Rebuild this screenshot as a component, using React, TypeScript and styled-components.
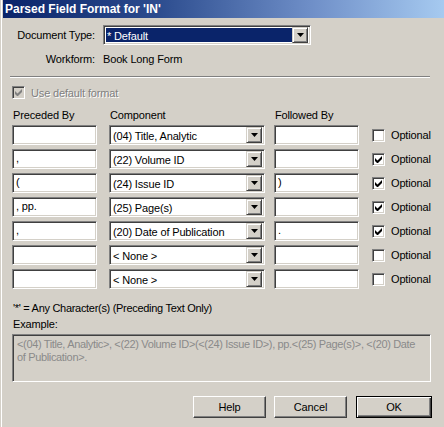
import React from "react";
import styled, { createGlobalStyle } from "styled-components";

const FACE = "#d4d0c8";
const SHADOW = "#808080";
const DARK = "#404040";

const GlobalStyle = createGlobalStyle`
  html, body { margin: 0; padding: 0; background: ${FACE}; }
  body {
    font-family: "Liberation Sans", Arial, sans-serif;
    font-size: 11px;
    letter-spacing: -0.15px;
    color: #000;
  }
  * { box-sizing: border-box; }
`;

const Window = styled.div`
  width: 444px;
  height: 427px;
  background: ${FACE};
  box-shadow: inset 1px 0 0 ${FACE}, inset 2px 0 0 #ffffff;
  padding-left: 3px;
  overflow: hidden;
`;

const TitleBar = styled.div`
  height: 18px;
  background: linear-gradient(to right, #0a246a 0%, #2c4c8e 35%, #6f8fc8 70%, #a6caf0 100%);
  color: #fff;
  font-weight: bold;
  font-size: 12px;
  letter-spacing: 0;
  line-height: 18px;
  padding-left: 2px;
  white-space: nowrap;
`;

const Body = styled.div`
  padding: 7px 12px 0 9px;
`;

const TopGrid = styled.div`
  display: grid;
  grid-template-columns: 83px 208px;
  column-gap: 8px;
  row-gap: 8px;
  align-items: center;
`;

const RightLabel = styled.div`
  text-align: right;
  white-space: nowrap;
`;

const SunkenBox = styled.div`
  border: 1px solid;
  border-color: ${SHADOW} #fff #fff ${SHADOW};
  box-shadow: inset 1px 1px 0 ${DARK}, inset -1px -1px 0 ${FACE};
  background: #fff;
`;

const Select = styled(SunkenBox)<{ $width?: number }>`
  height: 20px;
  width: ${(p) => (p.$width ? `${p.$width}px` : "auto")};
  display: flex;
  align-items: center;
  padding: 2px;
`;

const SelectValue = styled.div<{ $highlight?: boolean }>`
  flex: 1;
  height: 100%;
  line-height: 16px;
  padding-left: 1px;
  white-space: nowrap;
  overflow: hidden;
  background: ${(p) => (p.$highlight ? "#0a246a" : "transparent")};
  color: ${(p) => (p.$highlight ? "#fff" : "#000")};
`;

const DropButton = styled.div`
  width: 16px;
  height: 16px;
  flex: none;
  background: ${FACE};
  border: 1px solid;
  border-color: ${FACE} ${DARK} ${DARK} ${FACE};
  box-shadow: inset 1px 1px 0 #fff, inset -1px -1px 0 ${SHADOW};
  display: flex;
  align-items: center;
  justify-content: center;
`;

const Arrow = () => (
  <svg width="7" height="4" viewBox="0 0 7 4">
    <path d="M0 0h7L3.5 4z" fill="#000" />
  </svg>
);

const Separator = styled.div`
  margin: 11px 0 0 -2px;
  width: 420px;
  height: 2px;
  border-top: 1px solid ${SHADOW};
  border-bottom: 1px solid #fff;
`;

const CheckRow = styled.div`
  display: flex;
  align-items: center;
  gap: 6px;
  margin: 8px 0 0 0;
  height: 13px;
`;

const Check = styled.div<{ $disabled?: boolean }>`
  width: 13px;
  height: 13px;
  flex: none;
  border: 1px solid;
  border-color: ${SHADOW} #fff #fff ${SHADOW};
  box-shadow: inset 1px 1px 0 ${DARK}, inset -1px -1px 0 ${FACE};
  background: ${(p) => (p.$disabled ? FACE : "#fff")};
  display: flex;
  align-items: center;
  justify-content: center;
`;

const Tick = ({ color }: { color: string }) => (
  <svg width="7" height="7" viewBox="0 0 7 7">
    <path d="M0 2v3l2 2h1l4-4V0L2.5 4.5z" fill={color} />
  </svg>
);

const DisabledText = styled.span`
  color: ${SHADOW};
  text-shadow: 1px 1px 0 #fff;
  white-space: nowrap;
`;

const FieldGrid = styled.div`
  display: grid;
  grid-template-columns: 97px 165px 98px 19px auto;
  grid-template-rows: 12px;
  grid-auto-rows: 20px;
  row-gap: 4px;
  align-items: center;
  margin: 10px 0 0 0;
`;

const HeaderCell = styled.div`
  height: 12px;
  line-height: 12px;
  align-self: start;
  padding-left: 1px;
  white-space: nowrap;
`;

const TextBox = styled(SunkenBox)`
  width: 85px;
  height: 20px;
  line-height: 16px;
  padding-left: 3px;
  white-space: nowrap;
  overflow: hidden;
`;

const OptionCell = styled.div`
  white-space: nowrap;
`;

const Note = styled.div`
  margin: 13px 0 0 1px;
  white-space: nowrap;
  letter-spacing: -0.3px;
`;

const ExampleLabel = styled.div`
  margin: 4px 0 0 1px;
`;

const ExampleBox = styled.div`
  margin: 4px 0 0 0;
  width: 419px;
  height: 48px;
  border: 1px solid;
  border-color: ${SHADOW} #fff #fff ${SHADOW};
  box-shadow: inset 1px 1px 0 ${DARK}, inset -1px -1px 0 ${FACE};
  padding: 3px 4px;
  color: #8a8a8a;
  line-height: 13px;
  letter-spacing: -0.35px;
  overflow: hidden;
`;

const ExampleLine = styled.div`
  white-space: nowrap;
`;

const ButtonRow = styled.div`
  display: flex;
  justify-content: flex-end;
  gap: 8px;
  margin: 14px 0 0 0;
`;

const Button = styled.div<{ $default?: boolean }>`
  width: ${(p) => (p.$default ? 76 : 73)}px;
  height: 22px;
  background: ${FACE};
  border: 1px solid;
  border-color: ${(p) => (p.$default ? "#000" : `#fff ${DARK} ${DARK} #fff`)};
  box-shadow: ${(p) =>
    p.$default
      ? `inset 1px 1px 0 #fff, inset -1px -1px 0 ${DARK}, inset -2px -2px 0 ${SHADOW}`
      : `inset -1px -1px 0 ${SHADOW}`};
  display: flex;
  align-items: center;
  justify-content: center;
  margin-left: ${(p) => (p.$default ? 1 : 0)}px;
`;

type Row = { pre: string; comp: string; post: string; opt: boolean };

const rows: Row[] = [
  { pre: "", comp: "(04) Title, Analytic", post: "", opt: false },
  { pre: ",", comp: "(22) Volume ID", post: "", opt: true },
  { pre: "(", comp: "(24) Issue ID", post: ")", opt: true },
  { pre: ", pp.", comp: "(25) Page(s)", post: "", opt: true },
  { pre: ",", comp: "(20) Date of Publication", post: ".", opt: true },
  { pre: "", comp: "< None >", post: "", opt: false },
  { pre: "", comp: "< None >", post: "", opt: false },
];

export default function App() {
  return (
    <>
      <GlobalStyle />
      <Window>
        <TitleBar>Parsed Field Format for 'IN'</TitleBar>
        <Body>
          <TopGrid>
            <RightLabel>Document Type:</RightLabel>
            <Select>
              <SelectValue $highlight>* Default</SelectValue>
              <DropButton>
                <Arrow />
              </DropButton>
            </Select>
            <RightLabel>Workform:</RightLabel>
            <div>Book Long Form</div>
          </TopGrid>
          <Separator />
          <CheckRow>
            <Check $disabled>
              <Tick color={SHADOW} />
            </Check>
            <DisabledText>Use default format</DisabledText>
          </CheckRow>
          <FieldGrid>
            <HeaderCell>Preceded By</HeaderCell>
            <HeaderCell>Component</HeaderCell>
            <HeaderCell>Followed By</HeaderCell>
            <HeaderCell />
            <HeaderCell />
            {rows.map((r, i) => (
              <React.Fragment key={i}>
                <TextBox>{r.pre}</TextBox>
                <Select $width={156}>
                  <SelectValue>{r.comp}</SelectValue>
                  <DropButton>
                    <Arrow />
                  </DropButton>
                </Select>
                <TextBox>{r.post}</TextBox>
                <Check>{r.opt && <Tick color="#000" />}</Check>
                <OptionCell>Optional</OptionCell>
              </React.Fragment>
            ))}
          </FieldGrid>
          <Note>'*' = Any Character(s) (Preceding Text Only)</Note>
          <ExampleLabel>Example:</ExampleLabel>
          <ExampleBox>
            <ExampleLine>
              &lt;(04) Title, Analytic&gt;, &lt;(22) Volume ID&gt;(&lt;(24) Issue ID&gt;), pp.&lt;(25) Page(s)&gt;, &lt;(20) Date
            </ExampleLine>
            <ExampleLine>of Publication&gt;.</ExampleLine>
          </ExampleBox>
          <ButtonRow>
            <Button>Help</Button>
            <Button>Cancel</Button>
            <Button $default>OK</Button>
          </ButtonRow>
        </Body>
      </Window>
    </>
  );
}
